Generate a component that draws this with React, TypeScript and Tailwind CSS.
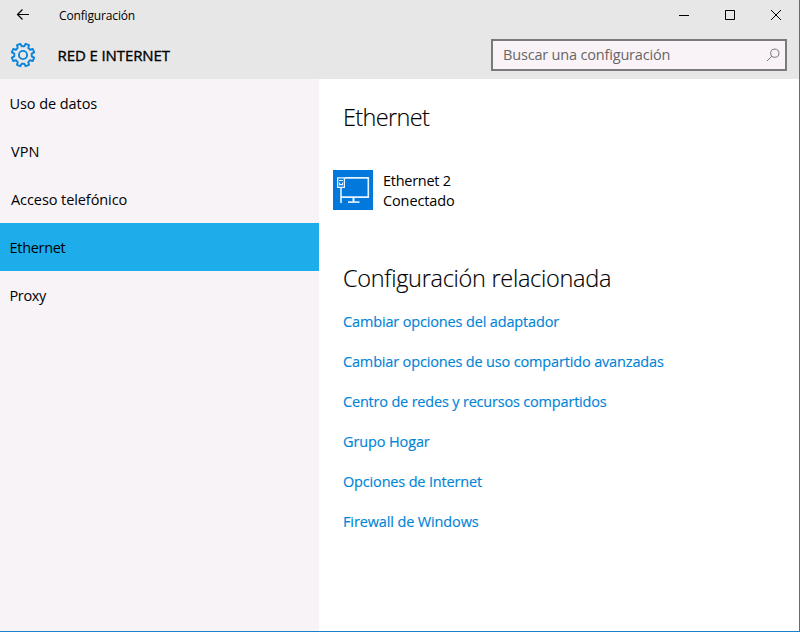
interface NavItem {
  id: string
  label: string
  className: string
}

const navItems: NavItem[] = [
  { id: 'datos', label: 'Uso de datos', className: 'pl-[9.5px] tracking-[-0.07px]' },
  { id: 'vpn', label: 'VPN', className: 'pl-[11px] tracking-[0.1px]' },
  { id: 'telefono', label: 'Acceso telefónico', className: 'pl-[11px] tracking-[-0.08px]' },
  { id: 'ethernet', label: 'Ethernet', className: 'pl-[9.5px] tracking-[-0.3px]' },
  { id: 'proxy', label: 'Proxy', className: 'pl-[9.5px] tracking-[-0.35px]' },
]

const links = [
  { label: 'Cambiar opciones del adaptador', className: 'tracking-[-0.15px]' },
  { label: 'Cambiar opciones de uso compartido avanzadas', className: 'tracking-[-0.16px]' },
  { label: 'Centro de redes y recursos compartidos', className: 'tracking-[-0.19px]' },
  { label: 'Grupo Hogar', className: 'tracking-[-0.12px]' },
  { label: 'Opciones de Internet', className: 'tracking-[-0.17px]' },
  { label: 'Firewall de Windows', className: 'tracking-[-0.13px]' },
]

// eight teeth, with a valley pointing straight up
function gearPath() {
  const steps = [[-14, 8.8], [-9, 11.5], [9, 11.5], [14, 8.8]]
  const points: string[] = []
  for (let i = 0; i < 8; i++) {
    for (const [offset, r] of steps) {
      const a = ((22.5 + i * 45 + offset) * Math.PI) / 180
      points.push(`${(13 + r * Math.sin(a)).toFixed(2)} ${(13 - r * Math.cos(a)).toFixed(2)}`)
    }
  }
  return `M${points.join('L')}Z`
}

function GearIcon() {
  return (
    <svg width="26" height="26" viewBox="0 0 26 26" fill="none" stroke="#0a84dc" strokeWidth="1.9" strokeLinejoin="round">
      <path d={gearPath()} />
      <circle cx="13" cy="13" r="4.1" />
    </svg>
  )
}

function EthernetIcon() {
  return (
    <svg width="40" height="40" viewBox="0 0 40 40" fill="none" stroke="#e8f4ff" strokeWidth="1.6">
      <path d="M12 7.9H35.3V27.1H8" />
      <path d="M20.5 27V32" strokeWidth="2" />
      <path d="M15 32.1H26.5" />
      <path d="M4.7 7.9H11.4V17.4H4.7Z" strokeWidth="1.3" />
      <path d="M6 10.5H10M6.6 12.5V14.6H9.5V12.5" strokeWidth="1.1" />
      <path d="M8 17V33" />
    </svg>
  )
}

function TitleBar() {
  return (
    <div className="flex h-[30px] items-center">
      <svg className="ml-4" width="14" height="14" viewBox="0 0 14 14" fill="none" stroke="#000" strokeWidth="1.2">
        <path d="M13 6.5H1.5M6.5 1.5L1.5 6.5L6.5 11.5" />
      </svg>
      <span className="ml-[29px] pt-px text-[12px] tracking-[-0.15px]">Configuración</span>
      <div className="ml-auto flex items-center gap-9 pr-[18px]">
        <svg width="10" height="10" viewBox="0 0 10 10" stroke="#000"><path d="M0 5.5H10" /></svg>
        <svg width="10" height="10" viewBox="0 0 10 10" stroke="#000" fill="none"><path d="M.5 .5H9.5V9.5H.5Z" /></svg>
        <svg width="10" height="10" viewBox="0 0 10 10" stroke="#000"><path d="M0 0L10 10M10 0L0 10" /></svg>
      </div>
    </div>
  )
}

export default function App() {
  return (
    <div className="flex h-[632px] w-[800px] flex-col overflow-hidden border-r border-b border-[#1a80c8] bg-white font-['Open_Sans','Noto_Sans',sans-serif] text-black">
      <header className="h-[79px] shrink-0 bg-[#e7e7e7]">
        <TitleBar />
        <div className="flex h-[49px] items-center">
          <div className="ml-[10px]"><GearIcon /></div>
          <h1 className="ml-[21.5px] pt-px text-[15px] tracking-[-0.1px] [-webkit-text-stroke:0.35px]">RED E INTERNET</h1>
          <div className="mr-3 ml-auto flex h-8 w-[296px] items-center border-2 border-[#7a7a7a] bg-[#f9f3f7] pr-[5px] pl-[10px] text-[14.5px] tracking-[-0.18px] text-[#666]">
            <span>Buscar una configuración</span>
            <svg className="ml-auto" width="14" height="14" viewBox="0 0 14 14" fill="none" stroke="#777">
              <circle cx="8.8" cy="5.2" r="4.1" />
              <path d="M5.8 8.2L1 13" />
            </svg>
          </div>
        </div>
      </header>
      <div className="flex flex-1">
        <nav className="w-[319px] bg-[#f8f3f7] text-[14.5px]">
          {navItems.map(item => (
            <div key={item.id} className={`flex h-12 items-center pt-0.5 ${item.className} ${item.id === 'ethernet' ? 'bg-[#1cadea]' : ''}`}>
              {item.label}
            </div>
          ))}
        </nav>
        <main className="flex-1 pt-[22px] pl-6">
          <h2 className="text-[23.5px] leading-8 font-light tracking-[-0.65px] [-webkit-text-stroke:0.15px]">Ethernet</h2>
          <div className="mt-[37px] -ml-[10px] flex h-10 items-center gap-[10px]">
            <div className="h-10 w-10 bg-[#0078dc]"><EthernetIcon /></div>
            <div className="pt-px text-[14.5px] leading-5">
              <p className="tracking-[-0.27px]">Ethernet 2</p>
              <p className="tracking-[-0.12px]">Conectado</p>
            </div>
          </div>
          <h2 className="mt-[52px] text-[23.5px] leading-8 font-light tracking-[-0.29px] [-webkit-text-stroke:0.15px]">Configuración relacionada</h2>
          <ul className="mt-2 text-[14.5px] text-[#0084d8] [-webkit-text-stroke:0.15px]">
            {links.map(link => (
              <li key={link.label} className={`flex h-10 items-center ${link.className}`}>{link.label}</li>
            ))}
          </ul>
        </main>
      </div>
    </div>
  )
}
